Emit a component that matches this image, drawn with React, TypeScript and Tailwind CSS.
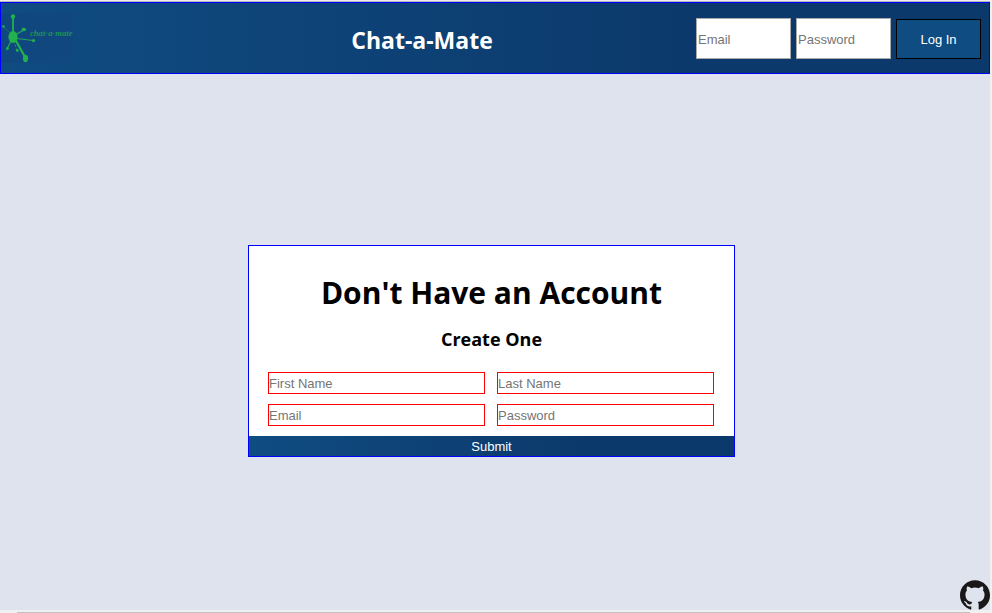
import React from "react";
import { SiGithub } from "react-icons/si";

function Logo() {
  return (
    <svg
      viewBox="0 0 73 50"
      className="h-[50px] w-[73px]"
      role="img"
      aria-label="chat-a-mate logo"
    >
      <rect width="73" height="50" fill="#11477f" />
      <g stroke="#22b14c" strokeLinecap="round">
        <path d="M12 23V4" strokeWidth="1.8" />
        <path d="M12 23L23 17" strokeWidth="1.3" />
        <path d="M12 25L32 27.5" strokeWidth="0.9" />
        <path d="M12 23L3 14" strokeWidth="0.5" opacity="0.7" />
        <path d="M12 24L6 36" strokeWidth="1.1" />
        <path d="M12 24L16 38" strokeWidth="0.6" strokeDasharray="2 2" />
        <path d="M14 26L24 44" strokeWidth="2.2" />
      </g>
      <g fill="#22b14c">
        <ellipse cx="12" cy="24" rx="4.6" ry="6" />
        <circle cx="12" cy="3.500" r="2.200" />
        <ellipse cx="22.800" cy="16.500" rx="2.300" ry="1.800" />
        <circle cx="32.500" cy="27.600" r="1.600" />
        <circle cx="2.500" cy="13.500" r="1.300" />
        <circle cx="6.500" cy="35.500" r="1.400" />
        <circle cx="16.300" cy="37.500" r="1.400" />
        <ellipse cx="24.500" cy="45.500" rx="2.600" ry="3.700" />
      </g>
      <text
        x="29"
        y="23"
        fill="#22b14c"
        opacity="0.7"
        fontSize="8.600"
        fontStyle="italic"
        fontWeight="bold"
        fontFamily="'Liberation Serif', serif"
      >
        chat-a-mate
      </text>
    </svg>
  );
}

type FieldProps = { label: string; type: string; className: string };

function Field({ label, type, className }: FieldProps) {
  return (
    <input
      type={type}
      placeholder={label}
      aria-label={label}
      className={`min-w-0 rounded-none bg-white font-['Liberation_Sans',Arial,sans-serif] text-[13px] text-black outline-none placeholder:text-[#757575] ${className}`}
    />
  );
}

const signInField = "h-[41px] w-[95px] border border-[#a9a9a9] px-px pt-0.5";
const signUpField = "h-[22px] border border-[#ff0000] pt-px";

export default function App() {
  return (
    <div className="flex min-h-screen flex-col border-r-2 border-[#f0f0f0] bg-[#dfe3ee] font-['Open_Sans','Noto_Sans',sans-serif] text-black">
      <div className="h-0.5 border-b border-[#b8b8b8] bg-[#f0f0f0]" />
      <header className="flex h-[72px] items-center border border-[#0000ff] bg-linear-to-r from-[#0f4c81] to-[#0c396c] to-70%">
        <div className="w-[147px]">
          <Logo />
        </div>
        <h1 className="flex-1 pt-1 text-center text-[23px] leading-8 font-bold text-white">
          Chat-a-Mate
        </h1>
        <form className="flex items-end gap-[5px] pr-2" onSubmit={(e) => e.preventDefault()}>
          <Field label="Email" type="email" className={signInField} />
          <Field label="Password" type="password" className={signInField} />
          <button
            type="submit"
            className="h-10 w-[85px] border border-black bg-[#0f4c81] pt-0.5 font-['Liberation_Sans',Arial,sans-serif] text-[13px] text-white"
          >
            Log In
          </button>
        </form>
      </header>

      <main className="relative flex flex-1 flex-col items-center justify-center px-4 pt-[18px]">
        <form
          className="mr-[7px] w-full max-w-[487px] border border-[#0000ff] bg-white"
          onSubmit={(e) => e.preventDefault()}
        >
          <h2 className="pt-[25px] text-center text-[30px] leading-[44px] font-bold">
            Don't Have an Account
          </h2>
          <h3 className="pt-[11px] text-center text-lg leading-[26px] font-bold">Create One</h3>
          <div className="grid grid-cols-2 gap-x-3 gap-y-2.5 pt-5 pr-5 pb-2.5 pl-[19px]">
            <Field label="First Name" type="text" className={signUpField} />
            <Field label="Last Name" type="text" className={signUpField} />
            <Field label="Email" type="email" className={signUpField} />
            <Field label="Password" type="password" className={signUpField} />
          </div>
          <button
            type="submit"
            className="block h-5 w-full bg-linear-to-r from-[#0f4c81] to-[#0c396c] to-70% pt-px font-['Liberation_Sans',Arial,sans-serif] text-[13px] leading-5 text-white"
          >
            Submit
          </button>
        </form>
        <a href="#github" aria-label="GitHub" className="absolute right-0 bottom-0 text-[#191717]">
          <SiGithub className="size-[30px]" />
        </a>
      </main>
      <div className="flex h-[3px] flex-col justify-end bg-[#f0f0f0] pr-5 pl-[17px]">
        <div className="h-px bg-[#c1c1c1]" />
      </div>
    </div>
  );
}
